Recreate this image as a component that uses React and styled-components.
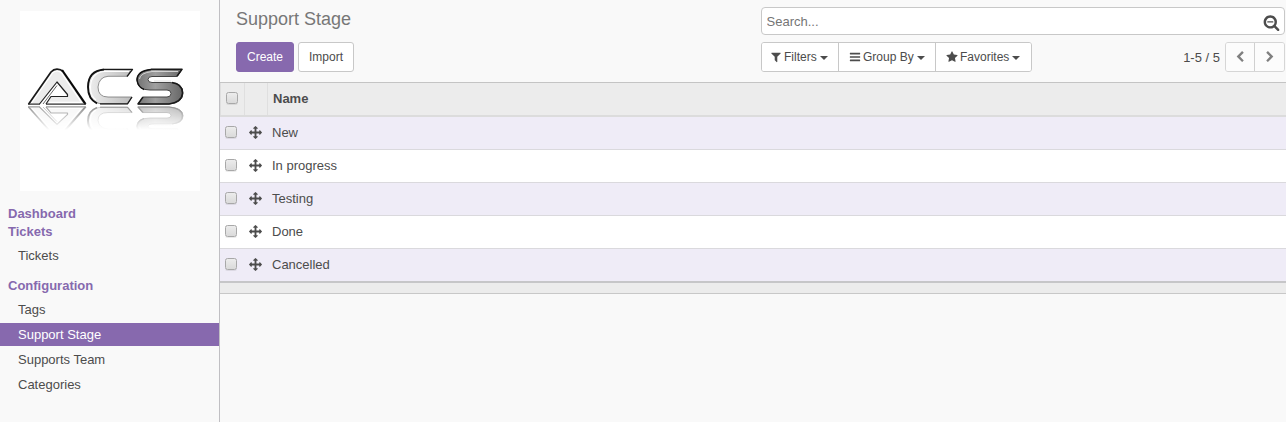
import React from 'react';
import styled, { createGlobalStyle, css } from 'styled-components';

const GlobalStyle = createGlobalStyle`
  * { box-sizing: border-box; }
  html, body { margin: 0; padding: 0; background: #f9f9f9; overflow: hidden; }
  body {
    font-family: "Liberation Sans", Arial, sans-serif;
    font-size: 13px;
    color: #4c4c4c;
  }
`;

const Page = styled.div`
  display: flex;
  height: 422px;
`;

const Sidebar = styled.aside`
  flex: none;
  width: 220px;
  border-right: 1px solid #c0bfc3;
`;

const LogoBox = styled.div`
  width: 180px;
  height: 180px;
  margin: 11px 0 14px 20px;
  background: #fff;
  svg { display: block; }
`;

const MenuHeading = styled.div`
  height: 18px;
  padding-left: 8px;
  line-height: 18px;
  font-weight: bold;
  color: #8669ae;
`;

const MenuList = styled.ul`
  list-style: none;
  margin: 3px 0 10px;
  padding: 0;
`;

const MenuItem = styled.li`
  height: 23px;
  margin-bottom: 2px;
  padding-left: 18px;
  line-height: 23px;
  ${(p) => p.$active && css`
    background: #8769ae;
    color: #fff;
  `}
`;

const Main = styled.main`
  flex: 1;
  min-width: 0;
`;

const ControlPanel = styled.header`
  height: 83px;
  display: flex;
  justify-content: space-between;
  padding: 7px 1px 0 16px;
  border-bottom: 1px solid #c4c4c4;
`;

const TitleSide = styled.div``;

const Title = styled.h1`
  height: 24px;
  margin: 0 0 11px;
  font-size: 18px;
  line-height: 24px;
  font-weight: normal;
  color: #777;
`;

const ButtonRow = styled.div`
  display: flex;
  gap: 4px;
`;

const Button = styled.button`
  height: 30px;
  width: ${(p) => p.$width}px;
  padding: 0;
  font: 12px "Liberation Sans", Arial, sans-serif;
  border-radius: 3px;
  border: 1px solid ${(p) => (p.$primary ? '#8669ae' : '#c8c8c8')};
  background: ${(p) => (p.$primary ? '#8769ae' : '#fff')};
  color: ${(p) => (p.$primary ? '#fff' : '#4c4c4c')};
`;

const SearchSide = styled.div`
  width: 524px;
`;

const SearchBox = styled.div`
  height: 28px;
  margin-bottom: 7px;
  display: flex;
  align-items: center;
  justify-content: space-between;
  padding: 2px 4px 0 0;
  background: #fff;
  border: 1px solid #c8c8c8;
  border-radius: 4px;
`;

const SearchInput = styled.input`
  flex: 1;
  border: 0;
  padding: 0 0 2px 4.5px;
  background: transparent;
  outline: none;
  font: 13px "Liberation Sans", Arial, sans-serif;
  &::placeholder { color: #757575; opacity: 1; }
`;

const ToolRow = styled.div`
  display: flex;
  justify-content: space-between;
`;

const Group = styled.div`
  display: flex;
  height: 30px;
  border: 1px solid ${(p) => (p.$soft ? '#d6d6d6' : '#c8c8c8')};
  border-radius: 3px;
  overflow: hidden;
`;

const FilterButton = styled.div`
  width: ${(p) => p.$width}px;
  display: flex;
  align-items: center;
  padding-left: ${(p) => p.$pad}px;
  background: #fff;
  font-size: 12px;
  & + & { border-left: 1px solid #c8c8c8; }
`;

const FilterLabel = styled.span`
  margin-left: ${(p) => p.$gap}px;
`;

const Caret = styled.span`
  margin: 2px 0 0 3px;
  border: 4px solid transparent;
  border-top-color: #4c4c4c;
  border-bottom: 0;
`;

const Pager = styled.div`
  display: flex;
  align-items: center;
  gap: 5px;
  font-size: 12px;
`;

const PagerCount = styled.span`
  font-size: 13px;
`;

const PagerButton = styled.div`
  width: ${(p) => p.$width}px;
  display: flex;
  align-items: center;
  justify-content: center;
  background: #fcfcfc;
  & + & { border-left: 1px solid #d0d0d0; }
`;

const IconSvg = styled.svg`
  flex: none;
  display: block;
  fill: ${(p) => p.$color || '#4c4c4c'};
`;

const Table = styled.div`
  border-bottom: 1px solid #c8c8c8;
`;

const HeaderRow = styled.div`
  display: flex;
  height: 34px;
  background: #ececec;
  border-bottom: 2px solid #dcdcdc;
  font-weight: bold;
`;

const HeaderCell = styled.div`
  display: flex;
  align-items: center;
  width: ${(p) => p.$width};
  padding: 0 0 2px 5px;
  border-left: 1px solid #dfdfdf;
`;

const Row = styled.div`
  display: flex;
  align-items: center;
  height: ${(p) => (p.$last ? 34 : 33)}px;
  padding: 0 0 2px 5px;
  background: ${(p) => (p.$odd ? '#efecf7' : '#fff')};
  border-bottom: ${(p) => (p.$last ? '2px solid #c6c6c8' : '1px solid #dad9dd')};
`;

const CheckBox = styled.span`
  flex: none;
  width: 12px;
  height: 12px;
  margin-right: ${(p) => p.$gap || 0}px;
  border: 1px solid #a8a8a8;
  border-radius: 2.5px;
  background: linear-gradient(#ececec, #dadada);
  box-shadow: 0 1px 0 rgba(0, 0, 0, 0.08);
`;

const RowLabel = styled.span`
  margin-left: 10px;
`;

const TableFooter = styled.div`
  height: 10px;
  background: #ececec;
`;

const paths = {
  filter: 'M1595 295q17 41-14 70l-493 493v742q0 42-39 59-13 5-25 5-27 0-45-19l-256-256q-19-19-19-45v-486l-493-493q-31-29-14-70 17-39 59-39h1280q42 0 59 39z',
  bars: 'M1664 1344v128q0 26-19 45t-45 19h-1408q-26 0-45-19t-19-45v-128q0-26 19-45t45-19h1408q26 0 45 19t19 45zm0-512v128q0 26-19 45t-45 19h-1408q-26 0-45-19t-19-45v-128q0-26 19-45t45-19h1408q26 0 45 19t19 45zm0-512v128q0 26-19 45t-45 19h-1408q-26 0-45-19t-19-45v-128q0-26 19-45t45-19h1408q26 0 45 19t19 45z',
  star: 'M1728 647q0 22-26 48l-363 354 86 500q1 7 1 20 0 21-10.5 35.5t-30.5 14.5q-19 0-40-12l-449-236-449 236q-22 12-40 12-21 0-31.5-14.5t-10.5-35.5q0-6 2-20l86-500-364-354q-25-27-25-48 0-37 56-46l502-73 225-455q19-41 49-41t49 41l225 455 502 73q56 9 56 46z',
  left: 'M1427 301l-531 531 531 531q19 19 19 45t-19 45l-166 166q-19 19-45 19t-45-19l-742-742q-19-19-19-45t19-45l742-742q19-19 45-19t45 19l166 166q19 19 19 45t-19 45z',
  right: 'M1363 877l-742 742q-19 19-45 19t-45-19l-166-166q-19-19-19-45t19-45l531-531-531-531q-19-19-19-45t19-45l166-166q19-19 45-19t45 19l742 742q19 19 19 45t-19 45z',
  searchMinus: 'M1088 800v64q0 13-9.5 22.5t-22.5 9.5h-576q-13 0-22.5-9.5t-9.5-22.5v-64q0-13 9.5-22.5t22.5-9.5h576q13 0 22.5 9.5t9.5 22.5zm128 32q0-185-131.5-316.5t-316.5-131.5-316.5 131.5-131.5 316.5 131.5 316.5 316.5 131.5 316.5-131.5 131.5-316.5zm512 832q0 53-37.5 90.5t-90.5 37.5q-54 0-90-38l-343-342q-179 124-399 124-143 0-273.5-55.5t-225-150-150-225-55.5-273.5 55.5-273.5 150-225 225-150 273.5-55.5 273.5 55.5 225 150 150 225 55.5 273.5q0 220-124 399l343 343q37 37 37 90z',
  move: 'M1792 896q0 26-19 45l-256 256q-19 19-45 19t-45-19-19-45v-128h-384v384h128q26 0 45 19t19 45-19 45l-256 256q-19 19-45 19t-45-19l-256-256q-19-19-19-45t19-45 45-19h128v-384h-384v128q0 26-19 45t-45 19-45-19l-256-256q-19-19-19-45t19-45l256-256q19-19 45-19t45 19 19 45v128h384v-384h-128q-26 0-45-19t-19-45 19-45l256-256q19-19 45-19t45 19l256 256q19 19 19 45t-19 45-45 19h-128v384h384v-128q0-26 19-45t45-19 45 19l256 256q19 19 19 45z',
};

function Icon({ name, size, color, box = '0 0 1792 1792' }) {
  return (
    <IconSvg width={size} height={size} viewBox={box} $color={color} aria-hidden="true">
      <path d={paths[name]} />
    </IconSvg>
  );
}

// Chrome emblem: a triangle mark and two ribbon bands, each with a bevel.
function Emblem() {
  return (
    <g strokeLinejoin="round">
      <path d="M8.500 93.200 L31 61 Q33.500 58 37 58 Q41 58 43.500 61 L65.500 93.200 H26 L31 85.500 H47.500 L37 71 L20.500 93.200 Z" fill="#ececec" />
      <path d="M11.500 92 L32.500 62 Q34.500 59.800 37 59.800 Q39.500 59.800 41.500 62 L61.500 91.500 H29" fill="none" stroke="#fff" strokeWidth="1.300" />
      <path d="M8.500 93.200 L31 61 Q33.500 58.200 37 58.200 Q41 58.200 43 60.500" fill="none" stroke="#1a1a1a" strokeWidth="1.700" />
      <path d="M42 59 L65.500 93.200" fill="none" stroke="#080808" strokeWidth="2.200" />
      <path d="M26 93.200 H66 M8 93.200 H20" stroke="#333" strokeWidth="1.300" />
      <path d="M26 93 L31 85.500 H47.500 V83.500 L37 71 L19.500 93" fill="none" stroke="#222" strokeWidth="1.200" />
      <path d="M23 93 L37 74.500" fill="none" stroke="#555" strokeWidth="0.900" />

      <path d="M112.500 58.500 H84 Q68 60 68 76 Q68 92 81 92.800 H107.500 L112 86 H88 Q78 86 78 76 Q79 66 88 65.300 H107 Z" fill="url(#silver)" stroke="#777" strokeWidth="0.800" />
      <path d="M84 58.500 Q68 60 68 76 Q68 88 77 92.300" fill="none" stroke="#111" strokeWidth="1.900" />
      <path d="M109 60.500 H84 Q70.500 62 70.500 77 Q70.500 85 76 89" fill="none" stroke="#fff" strokeWidth="1.100" />
      <path d="M84 58.300 H112.500 L107 65.500 M80 92.800 H107.500 L112 86" fill="none" stroke="#1a1a1a" strokeWidth="1.300" />

      <path d="M162 58.500 H131 Q117 60 117 69 Q117 79 130 79 H147 Q151 79 151 82.500 Q151 86 147 86 H123 L118 93 H149 Q163 92 163 82 Q163 72 150 71.500 H132 Q128 71.500 128 68.500 Q128 65.500 132 65.500 H157 Z" fill="url(#steel)" stroke="#444" strokeWidth="1" />
      <path d="M131 58.500 Q117 60 117 69 Q118 76 124 78.500" fill="none" stroke="#111" strokeWidth="1.500" />
      <path d="M131 58.300 H162 L157 65.300 M152 71.500 Q162.500 73 162.500 82 Q162 91 149 93 H118 L123 86" fill="none" stroke="#1a1a1a" strokeWidth="1.500" />
      <path d="M158 60.500 H132 Q120 62 119.500 68 M134 70 H151" fill="none" stroke="#ddd" strokeWidth="0.900" />
    </g>
  );
}

function Logo() {
  return (
    <svg width="180" height="180" viewBox="0 0 180 180" role="img" aria-label="ACS">
      <defs>
        <linearGradient id="silver" x1="0" y1="0" x2="1" y2="0">
          <stop offset="0" stopColor="#eee" />
          <stop offset="1" stopColor="#bbb" />
        </linearGradient>
        <linearGradient id="steel" x1="0" y1="0" x2="1" y2="0">
          <stop offset="0" stopColor="#737373" />
          <stop offset="0.400" stopColor="#a0a0a0" />
          <stop offset="1" stopColor="#666" />
        </linearGradient>
        <linearGradient id="fade" gradientUnits="userSpaceOnUse" x1="0" y1="94" x2="0" y2="119">
          <stop offset="0" stopColor="#fff" stopOpacity="0.500" />
          <stop offset="1" stopColor="#fff" stopOpacity="0" />
        </linearGradient>
        <mask id="reflection" maskUnits="userSpaceOnUse" x="0" y="94" width="180" height="26">
          <rect y="94" width="180" height="26" fill="url(#fade)" />
        </mask>
      </defs>
      <Emblem />
      <g mask="url(#reflection)">
        <g transform="translate(0 169.500) scale(1 -0.790)">
          <Emblem />
        </g>
      </g>
    </svg>
  );
}

const records = ['New', 'In progress', 'Testing', 'Done', 'Cancelled'];

export default function App() {
  return (
    <>
      <GlobalStyle />
      <Page>
        <Sidebar>
          <LogoBox><Logo /></LogoBox>
          <MenuHeading>Dashboard</MenuHeading>
          <MenuHeading>Tickets</MenuHeading>
          <MenuList>
            <MenuItem>Tickets</MenuItem>
          </MenuList>
          <MenuHeading>Configuration</MenuHeading>
          <MenuList>
            <MenuItem>Tags</MenuItem>
            <MenuItem $active>Support Stage</MenuItem>
            <MenuItem>Supports Team</MenuItem>
            <MenuItem>Categories</MenuItem>
          </MenuList>
        </Sidebar>
        <Main>
          <ControlPanel>
            <TitleSide>
              <Title>Support Stage</Title>
              <ButtonRow>
                <Button $primary $width={58}>Create</Button>
                <Button $width={56}>Import</Button>
              </ButtonRow>
            </TitleSide>
            <SearchSide>
              <SearchBox>
                <SearchInput placeholder="Search..." />
                <Icon name="searchMinus" size={17} />
              </SearchBox>
              <ToolRow>
                <Group>
                  <FilterButton $width={76} $pad={8}>
                    <Icon name="filter" size={12} />
                    <FilterLabel $gap={2}>Filters</FilterLabel>
                    <Caret />
                  </FilterButton>
                  <FilterButton $width={97} $pad={10}>
                    <Icon name="bars" size={12} />
                    <FilterLabel $gap={2}>Group By</FilterLabel>
                    <Caret />
                  </FilterButton>
                  <FilterButton $width={96} $pad={9.5}>
                    <Icon name="star" size={12} />
                    <FilterLabel $gap={2.5}>Favorites</FilterLabel>
                    <Caret />
                  </FilterButton>
                </Group>
                <Pager>
                  <PagerCount>1-5 / 5</PagerCount>
                  <Group $soft>
                    <PagerButton $width={28}><Icon name="left" size={12} color="#808080" /></PagerButton>
                    <PagerButton $width={30}><Icon name="right" size={12} color="#808080" /></PagerButton>
                  </Group>
                </Pager>
              </ToolRow>
            </SearchSide>
          </ControlPanel>
          <Table>
            <HeaderRow>
              <HeaderCell $width="24px"><CheckBox /></HeaderCell>
              <HeaderCell $width="23px" />
              <HeaderCell $width="auto">Name</HeaderCell>
            </HeaderRow>
            {records.map((label, i) => (
              <Row key={label} $odd={i % 2 === 0} $last={i === records.length - 1}>
                <CheckBox $gap={12} />
                <Icon name="move" size={13} />
                <RowLabel>{label}</RowLabel>
              </Row>
            ))}
            <TableFooter />
          </Table>
        </Main>
      </Page>
    </>
  );
}
